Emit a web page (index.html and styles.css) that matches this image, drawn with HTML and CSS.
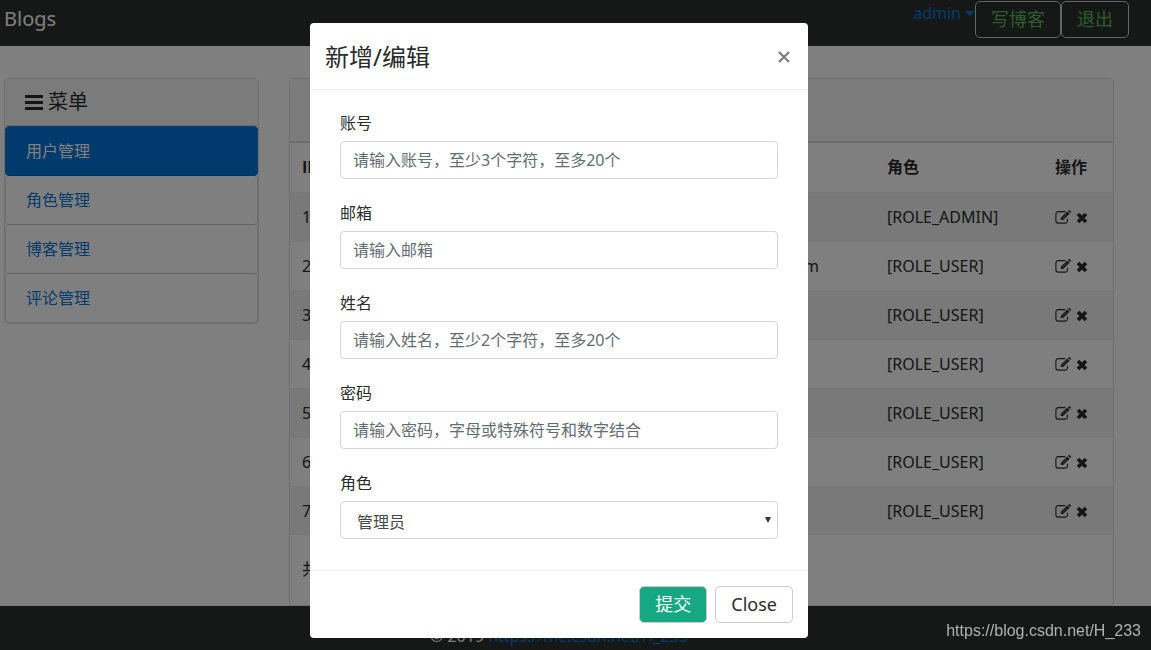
FILE: index.html
```html
<!DOCTYPE html>
<html lang="zh-CN">
<head>
<meta charset="utf-8">
<meta name="viewport" content="width=device-width, initial-scale=1">
<title>Blogs</title>
<link rel="stylesheet" href="styles.css">
</head>
<body>
<svg class="sprite" aria-hidden="true">
  <symbol id="edit" viewBox="0 0 16 14">
    <path d="M10.4 1.6H3.2A2.3 2.3 0 0 0 .9 3.900v6.900a2.300 2.300 0 0 0 2.300 2.300h7a2.300 2.300 0 0 0 2.300-2.300V8.700" fill="none" stroke="currentColor" stroke-width="1.100"/>
    <path d="M12.300 1.400l2.300 2.300-6.500 6.400H5.800V7.800zM13 .7l.7-.5q.5-.4 1 0l1.100 1.100q.4.500 0 1l-.6.700z" fill="currentColor"/>
    <path d="M7 8.900l5-5" stroke="#bbb" stroke-width=".6"/>
  </symbol>
  <symbol id="remove" viewBox="0 0 14 14">
    <path d="M3 3l8 8M11 3l-8 8" stroke="currentColor" stroke-width="3.600"/>
  </symbol>
</svg>
<header class="navbar">
  <a class="brand" href="#">Blogs</a>
  <nav class="nav-actions">
    <a class="user" href="#">admin <span class="caret"></span></a>
    <button class="btn btn-nav" type="button">写博客</button>
    <button class="btn btn-nav" type="button">退出</button>
  </nav>
</header>
<main class="layout">
  <aside class="card">
    <h2 class="menu-title">
      <svg class="bars" viewBox="0 0 18 16" aria-hidden="true"><path d="M0 2.500h18M0 8.500h18M0 14.500h18" stroke="currentColor" stroke-width="3"/></svg>
      菜单
    </h2>
    <nav class="menu">
      <a class="menu-item active" href="#">用户管理</a>
      <a class="menu-item" href="#">角色管理</a>
      <a class="menu-item" href="#">博客管理</a>
      <a class="menu-item" href="#">评论管理</a>
    </nav>
  </aside>
  <section class="card panel">
    <div class="panel-head"></div>
    <table class="users">
      <colgroup><col class="col-id"><col class="col-mail"><col class="col-role"><col class="col-act"></colgroup>
      <thead><tr><th>ID</th><th></th><th>角色</th><th>操作</th></tr></thead>
      <tbody>
        <tr><td>1</td><td></td><td>[ROLE_ADMIN]</td><td><svg class="edit"><use href="#edit"/></svg> <svg class="remove"><use href="#remove"/></svg></td></tr>
        <tr><td>2</td><td class="mail">@qq.com</td><td>[ROLE_USER]</td><td><svg class="edit"><use href="#edit"/></svg> <svg class="remove"><use href="#remove"/></svg></td></tr>
        <tr><td>3</td><td></td><td>[ROLE_USER]</td><td><svg class="edit"><use href="#edit"/></svg> <svg class="remove"><use href="#remove"/></svg></td></tr>
        <tr><td>4</td><td></td><td>[ROLE_USER]</td><td><svg class="edit"><use href="#edit"/></svg> <svg class="remove"><use href="#remove"/></svg></td></tr>
        <tr><td>5</td><td></td><td>[ROLE_USER]</td><td><svg class="edit"><use href="#edit"/></svg> <svg class="remove"><use href="#remove"/></svg></td></tr>
        <tr><td>6</td><td></td><td>[ROLE_USER]</td><td><svg class="edit"><use href="#edit"/></svg> <svg class="remove"><use href="#remove"/></svg></td></tr>
        <tr><td>7</td><td></td><td>[ROLE_USER]</td><td><svg class="edit"><use href="#edit"/></svg> <svg class="remove"><use href="#remove"/></svg></td></tr>
      </tbody>
    </table>
    <div class="pager">共</div>
  </section>
</main>
<footer class="footer">© 2019 <a href="#">https://me.csdn.net/H_233</a></footer>

<div class="overlay">
  <form class="modal" role="dialog" aria-labelledby="modal-title">
    <div class="modal-head">
      <h1 id="modal-title" class="modal-title">新增/编辑</h1>
      <button class="close" type="button" aria-label="Close"><svg viewBox="0 0 12 12"><path d="M1 1l10 10M11 1L1 11" stroke="currentColor" stroke-width="2.400"/></svg></button>
    </div>
    <div class="modal-body">
      <div class="field"><label for="account">账号</label><input id="account" class="control" type="text" placeholder="请输入账号，至少3个字符，至多20个"></div>
      <div class="field"><label for="email">邮箱</label><input id="email" class="control" type="email" placeholder="请输入邮箱"></div>
      <div class="field"><label for="name">姓名</label><input id="name" class="control" type="text" placeholder="请输入姓名，至少2个字符，至多20个"></div>
      <div class="field"><label for="password">密码</label><input id="password" class="control" type="password" placeholder="请输入密码，字母或特殊符号和数字结合"></div>
      <div class="field"><label for="role">角色</label>
        <div class="select-wrap"><select id="role" class="control"><option>管理员</option></select><svg class="arrow" viewBox="0 0 6 6" aria-hidden="true"><path d="M0 0h6L3 6z" fill="currentColor"/></svg></div>
      </div>
    </div>
    <div class="modal-foot">
      <button class="btn btn-submit" type="button">提交</button>
      <button class="btn btn-close" type="button">Close</button>
    </div>
  </form>
</div>
<div class="watermark">https://blog.csdn.net/H_233</div>
</body>
</html>
```
FILE: styles.css
```css
* { box-sizing: border-box; }
body {
  margin: 0;
  overflow: hidden;
  background: #fff;
  color: #292b2c;
  font: 16px/24px "Noto Sans", "Noto Sans CJK SC", sans-serif;
}
button, input, select { font: inherit; }
a { color: #0275d8; text-decoration: none; }
.sprite { display: none; }

.navbar {
  display: flex;
  justify-content: space-between;
  align-items: flex-start;
  height: 46px;
  padding: 1px 22px 0 4px;
  background: #2c302e;
}
.brand { color: #fff; font-size: 20px; line-height: 36px; }
.nav-actions { display: flex; }
.user { display: flex; align-items: center; gap: 4px; height: 24px; }
.caret { border: 5px solid transparent; border-top-color: currentColor; border-bottom: 0; }
.btn {
  height: 37px;
  padding: 0 15px;
  border: 1px solid #ccc;
  border-radius: 5px;
  font-size: 18px;
  line-height: 35px;
}
.btn-nav { background: transparent; color: #5cb85c; }

.layout {
  display: grid;
  grid-template-columns: 17fr 55fr;
  gap: 30px;
  align-items: start;
  padding: 32px 37px 0 4px;
}
.card { border: 1px solid rgba(0, 0, 0, .125); border-radius: 4px; }
.menu-title {
  display: flex;
  align-items: center;
  gap: 5px;
  margin: 0;
  height: 47px;
  padding: 0 20px;
  border-bottom: 1px solid rgba(0, 0, 0, .125);
  background: #f7f7f7;
  font-size: 20px;
  font-weight: 400;
}
.bars { width: 18px; height: 16px; }
.menu { display: flex; flex-direction: column; }
.menu-item {
  height: 50px;
  margin-bottom: -1px;
  padding: 12px 20px;
  border: 1px solid rgba(0, 0, 0, .125);
  border-radius: 4px;
}
.menu-item:last-child { margin-bottom: 0; }
.menu-item.active { background: #0275d8; border-color: #0275d8; color: #fff; }

.panel-head { height: 62px; background: #f7f7f7; }
.users { width: 100%; border-collapse: collapse; table-layout: fixed; }
.col-id { width: 16%; }
.col-role { width: 168px; }
.col-act { width: 70px; }
.users th, .users td {
  height: 49px;
  padding: 12px;
  border-top: 1px solid #eceeef;
  text-align: left;
  white-space: nowrap;
}
.users th {
  height: 50px;
  border-top: 2px solid #dcdcdc;
  border-bottom: 1px solid #eceeef;
  font-family: "Open Sans", "Noto Sans CJK SC", sans-serif;
}
.users tbody tr:nth-child(odd) { background: rgba(0, 0, 0, .05); }
.users td.mail { padding-right: 56px; text-align: right; }
.edit { width: 16px; height: 14px; vertical-align: -1px; }
.remove { width: 14px; height: 14px; vertical-align: -2px; }
.pager { height: 70px; padding: 22px 12px; }
.footer {
  padding: 18px 33px 18px 0;
  background: #2c302e;
  color: #fff;
  text-align: center;
}

.overlay {
  position: fixed;
  inset: 0;
  padding: 23px 33px 12px 0;
  background: rgba(0, 0, 0, .5);
}
.modal {
  width: 100%;
  max-width: 498px;
  margin: 0 auto;
  border-radius: 4px;
  background: #fff;
}
.modal-head {
  display: flex;
  align-items: center;
  justify-content: space-between;
  padding: 16px 18px 14px 15px;
  border-bottom: 1px solid #eceeef;
}
.modal-title { margin: 0; font-size: 24px; font-weight: 400; line-height: 36px; }
.close { display: flex; padding: 0; border: 0; background: none; color: #808080; }
.close svg { width: 12px; height: 12px; }
.modal-body { display: grid; gap: 22px; padding: 21px 30px 31px; }
.field { display: grid; gap: 6px; }
.control {
  width: 100%;
  height: 38px;
  padding: 0 12px;
  border: 1px solid #d5d6d7;
  border-radius: 4px;
  background: #fff;
  color: #464a4c;
}
.control::placeholder { color: #636c72; opacity: 1; }
.select-wrap { position: relative; }
select.control { display: block; appearance: none; padding: 4px 16px 0; }
.arrow { position: absolute; top: 16px; right: 7px; width: 6px; height: 6px; color: #333; }
.modal-foot {
  display: flex;
  justify-content: flex-end;
  gap: 8px;
  padding: 15px;
  border-top: 1px solid #eceeef;
}
.btn-submit { background: #15a882; color: #fff; }
.btn-close { background: #fff; color: #292b2c; }
.watermark {
  position: fixed;
  right: 10px;
  bottom: 7px;
  color: #b0b1b1;
  font: 16px/24px "Liberation Sans", sans-serif;
}
```
